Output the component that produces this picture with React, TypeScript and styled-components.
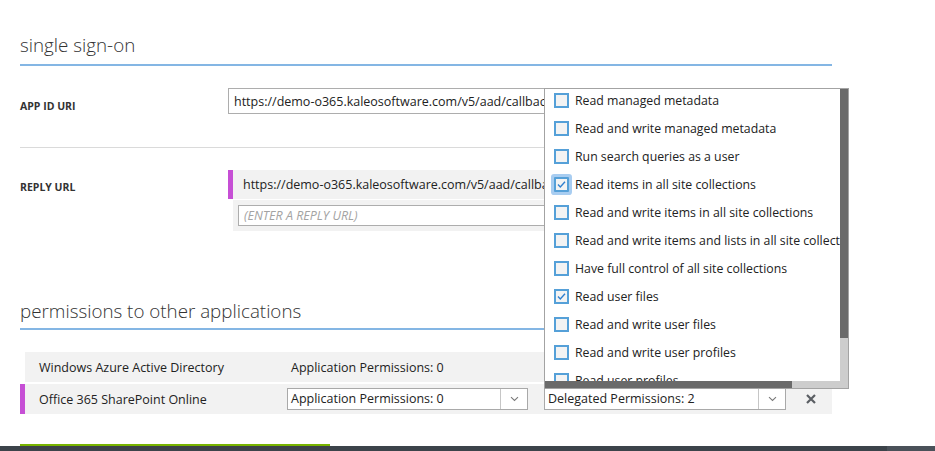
import React from "react";
import styled, { createGlobalStyle } from "styled-components";

const Global = createGlobalStyle`
  html, body { margin: 0; padding: 0; background: #fff; overflow: hidden; }
  body { font-family: "Open Sans", "Segoe UI", "Noto Sans", sans-serif; color: #333; }
  * { box-sizing: border-box; }
`;

const Page = styled.div`
  width: 935px;
  height: 451px;
  display: flex;
  flex-direction: column;
  overflow: hidden;
`;

const Content = styled.main`
  padding: 0 103px 0 20px;
`;

const SectionTitle = styled.h2<{ $top: number; $pb: number }>`
  margin: ${(p) => p.$top}px 0 0;
  font-size: 18.8px;
  font-weight: 300;
  line-height: 24px;
  padding-bottom: ${(p) => p.$pb}px;
  border-bottom: 2px solid #84b6e4;
  color: #333;
`;

const FieldRow = styled.div<{ $pb: number; $divider?: boolean }>`
  display: grid;
  grid-template-columns: 208px 1fr;
  align-items: start;
  padding: 22px 0 ${(p) => p.$pb}px;
  border-bottom: ${(p) => (p.$divider ? "1px solid #dadada" : "none")};
`;

const FieldLabel = styled.div<{ $pt: number }>`
  height: 26px;
  font-size: 10.5px;
  font-weight: 700;
  text-transform: uppercase;
  line-height: 26px;
  padding-top: ${(p) => p.$pt}px;
  color: #333;
  white-space: nowrap;
`;

const TextInput = styled.div`
  height: 26px;
  border: 1px solid #adadad;
  padding: 2px 5px 0;
  font-size: 12.5px;
  line-height: 22px;
  white-space: nowrap;
  overflow: hidden;
  color: #222;
`;

const UrlList = styled.div`
  display: flex;
  flex-direction: column;
  gap: 1px;
`;

const UrlEntry = styled.div`
  height: 29px;
  border-left: 5px solid #c64fd5;
  background: #f2f2f2;
  padding: 1px 10px 0;
  font-size: 12.5px;
  line-height: 28px;
  white-space: nowrap;
  overflow: hidden;
  color: #222;
`;

const NewUrlBlock = styled.div`
  margin-left: 5px;
  background: #f2f2f2;
  padding: 5px 0 5px 5px;
`;

const NewUrlInput = styled.div`
  height: 21px;
  border: 1px solid #adadad;
  background: #fff;
  padding: 0 5px;
  font-size: 12.5px;
  font-style: italic;
  line-height: 19px;
  color: #a3a3a3;
`;

const PermTable = styled.div`
  margin-top: 22px;
  display: flex;
  flex-direction: column;
  gap: 2px;
`;

const PermRow = styled.div<{ $active?: boolean }>`
  display: grid;
  grid-template-columns: 262px 241px 16px 242px 46px;
  align-items: center;
  height: 30px;
  border-left: 5px solid ${(p) => (p.$active ? "#c64fd5" : "transparent")};
  background: #f2f2f2;
  background-clip: padding-box;
  font-size: 12.5px;
  color: #222;
`;

const AppName = styled.div`
  padding-left: 14px;
  padding-top: 1px;
`;

const PlainValue = styled.div`
  padding-left: 4px;
  padding-top: 1px;
`;

const SelectWrap = styled.div`
  position: relative;
`;

const Select = styled.div`
  display: flex;
  height: 22px;
  border: 1px solid #a9a9a9;
  background: #fff;
`;

const SelectValue = styled.div`
  flex: 1;
  padding-left: 3px;
  line-height: 20px;
  white-space: nowrap;
`;

const SelectButton = styled.div`
  width: 27px;
  border-left: 1px solid #c6c6c6;
  display: flex;
  align-items: center;
  justify-content: center;
`;

const RemoveCell = styled.div`
  display: flex;
  align-items: center;
  justify-content: center;
  padding-left: 4px;
`;

const Panel = styled.div`
  position: absolute;
  left: 0;
  bottom: calc(100% - 1px);
  width: 305px;
  height: 301px;
  border: 1px solid #a3a3a3;
  background: #fff;
  display: grid;
  grid-template-columns: 1fr 8px;
  grid-template-rows: 1fr 7px;
  z-index: 10;
`;

const OptionList = styled.ul`
  margin: 0;
  padding: 0 0 0 9px;
  list-style: none;
  overflow: hidden;
  display: flex;
  flex-direction: column;
  gap: 6px;
`;

const Option = styled.li`
  flex: none;
  height: 22px;
  display: flex;
  align-items: center;
  gap: 6px;
  font-size: 12.3px;
  color: #222;
  white-space: nowrap;
`;

const Box = styled.span<{ $focus?: boolean }>`
  flex: none;
  width: 15px;
  height: 15px;
  border: 2px solid #55a0d8;
  background: #f3f3f3;
  display: flex;
  align-items: center;
  justify-content: center;
  box-shadow: ${(p) => (p.$focus ? "0 0 0 3px #a8cdf1" : "none")};
  border-radius: ${(p) => (p.$focus ? "1px" : "0")};
`;

const VTrack = styled.div`
  background: #cdcdcd;
`;

const VThumb = styled.div`
  background: #6a6a6a;
  width: 100%;
`;

const HTrack = styled.div`
  background: #cdcdcd;
`;

const HThumb = styled.div`
  background: #6a6a6a;
  height: 100%;
`;

const Corner = styled.div`
  background: #cdcdcd;
`;

const Footer = styled.footer`
  margin-top: auto;
`;

const ActiveTab = styled.div`
  margin-left: 20px;
  width: 310px;
  height: 2px;
  background: #78b400;
`;

const DarkBar = styled.div`
  height: 5px;
  background: #3c434a;
  display: flex;
  justify-content: flex-end;
`;

const BarButton = styled.div`
  width: 48px;
  background: #4a5159;
`;

const Chevron = () => (
  <svg width="9" height="6" viewBox="0 0 9 6">
    <path d="M1 1.2 L4.5 4.5 L8 1.2" fill="none" stroke="#7a7a7a" strokeWidth="1.1" />
  </svg>
);

const Check = () => (
  <svg width="11" height="11" viewBox="0 0 11 11">
    <path d="M2 5.6 L4.3 7.9 L9 2.8" fill="none" stroke="#2f7fcf" strokeWidth="1.4" />
  </svg>
);

const RemoveIcon = () => (
  <svg width="10" height="10" viewBox="0 0 10 10">
    <path d="M1 1 L9 9 M9 1 L1 9" stroke="#5a5e63" strokeWidth="2.2" />
  </svg>
);

const options: { label: string; checked?: boolean; focus?: boolean }[] = [
  { label: "Read managed metadata" },
  { label: "Read and write managed metadata" },
  { label: "Run search queries as a user" },
  { label: "Read items in all site collections", checked: true, focus: true },
  { label: "Read and write items in all site collections" },
  { label: "Read and write items and lists in all site collections" },
  { label: "Have full control of all site collections" },
  { label: "Read user files", checked: true },
  { label: "Read and write user files" },
  { label: "Read and write user profiles" },
  { label: "Read user profiles" },
];

const vThumb = 249;
const hThumb = 247;

export default function App() {
  return (
    <Page>
      <Global />
      <Content>
        <SectionTitle $top={33} $pb={7}>single sign-on</SectionTitle>
        <FieldRow $pb={33} $divider>
          <FieldLabel $pt={5}>App ID URI</FieldLabel>
          <TextInput>https://demo-o365.kaleosoftware.com/v5/aad/callback</TextInput>
        </FieldRow>
        <FieldRow $pb={0}>
          <FieldLabel $pt={4}>Reply URL</FieldLabel>
          <UrlList>
            <UrlEntry>https://demo-o365.kaleosoftware.com/v5/aad/callback</UrlEntry>
            <NewUrlBlock>
              <NewUrlInput>(ENTER A REPLY URL)</NewUrlInput>
            </NewUrlBlock>
          </UrlList>
        </FieldRow>

        <SectionTitle $top={68} $pb={5}>permissions to other applications</SectionTitle>
        <PermTable>
          <PermRow>
            <AppName>Windows Azure Active Directory</AppName>
            <PlainValue>Application Permissions: 0</PlainValue>
            <span />
            <span />
            <span />
          </PermRow>
          <PermRow $active>
            <AppName>Office 365 SharePoint Online</AppName>
            <SelectWrap>
              <Select>
                <SelectValue>Application Permissions: 0</SelectValue>
                <SelectButton>
                  <Chevron />
                </SelectButton>
              </Select>
            </SelectWrap>
            <span />
            <SelectWrap>
              <Select>
                <SelectValue>Delegated Permissions: 2</SelectValue>
                <SelectButton>
                  <Chevron />
                </SelectButton>
              </Select>
              <Panel>
                <OptionList>
                  {options.map((o) => (
                    <Option key={o.label}>
                      <Box $focus={o.focus}>{o.checked && <Check />}</Box>
                      {o.label}
                    </Option>
                  ))}
                </OptionList>
                <VTrack>
                  <VThumb style={{ height: vThumb }} />
                </VTrack>
                <HTrack>
                  <HThumb style={{ width: hThumb }} />
                </HTrack>
                <Corner />
              </Panel>
            </SelectWrap>
            <RemoveCell>
              <RemoveIcon />
            </RemoveCell>
          </PermRow>
        </PermTable>
      </Content>
      <Footer>
        <ActiveTab />
        <DarkBar>
          <BarButton />
        </DarkBar>
      </Footer>
    </Page>
  );
}
